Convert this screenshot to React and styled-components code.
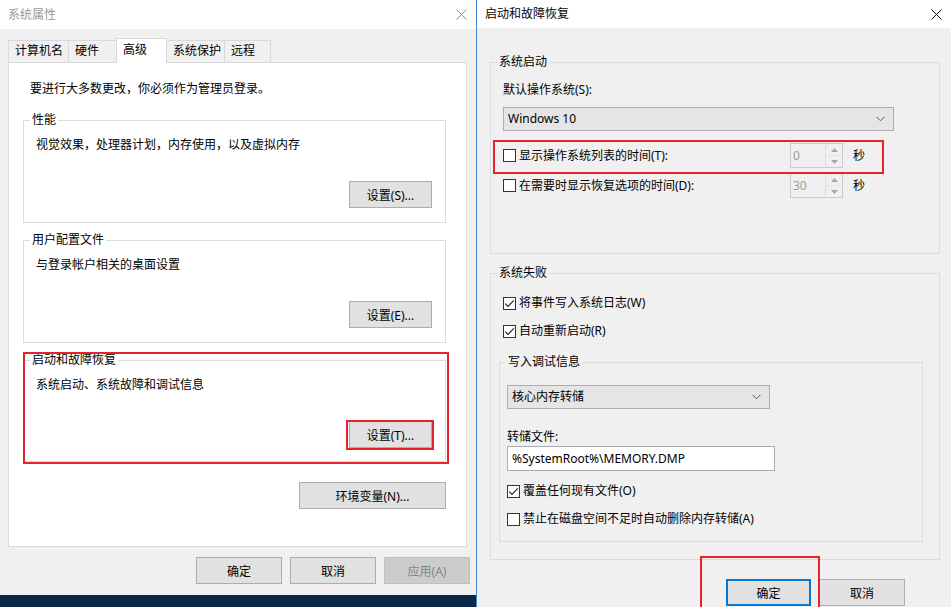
import React from 'react';
import styled, { createGlobalStyle } from 'styled-components';

const font = `"Noto Sans", "Noto Sans CJK SC", sans-serif`;

const GlobalStyle = createGlobalStyle`
  html, body {
    margin: 0;
    padding: 0;
    background: #0c2849;
  }
  body {
    font-family: ${font};
    font-size: 12px;
    line-height: 16px;
    color: #000;
  }
  * { box-sizing: border-box; }
`;

const Screen = styled.div`
  display: flex;
  width: 951px;
  height: 607px;
  overflow: hidden;
`;

const LeftColumn = styled.div`
  width: 476px;
  display: flex;
  flex-direction: column;
`;

const Dialog = styled.div`
  display: flex;
  flex-direction: column;
  background: #f0f0f0;
  height: ${(p) => p.$h}px;
  flex: ${(p) => (p.$grow ? 1 : 'none')};
  border-left: ${(p) => (p.$active ? '1px solid #3b87cc' : 'none')};
`;

const TitleBar = styled.div`
  display: flex;
  align-items: center;
  justify-content: space-between;
  height: ${(p) => p.$h}px;
  padding: 0 9px 0 8px;
  background: #fff;
  flex: none;
`;

const Title = styled.span`
  color: ${(p) => (p.$dim ? '#9a9a9a' : '#000')};
`;

const CloseIcon = ({ dim }) => (
  <svg width="11" height="11" viewBox="0 0 11 11">
    <path d="M0.5 0.5L10.5 10.5M10.5 0.5L0.5 10.5" stroke={dim ? '#8a8a8a' : '#111'} strokeWidth="1" />
  </svg>
);

const LeftBody = styled.div`
  display: flex;
  flex-direction: column;
  padding: 9px 6px 0 8px;
`;

const TabStrip = styled.div`
  display: flex;
  align-items: flex-end;
  height: 25px;
  margin-bottom: -1px;
  position: relative;
  z-index: 1;
`;

const Tab = styled.div`
  width: ${(p) => p.$w}px;
  height: ${(p) => (p.$selected ? 25 : 23)}px;
  margin-right: -1px;
  padding: ${(p) => (p.$selected ? '3px' : '2px')} 0 0 6px;
  border: 1px solid #d9d9d9;
  border-bottom: ${(p) => (p.$selected ? 'none' : '1px solid #d9d9d9')};
  background: ${(p) => (p.$selected ? '#fff' : '#f0f0f0')};
  white-space: nowrap;
  position: relative;
  z-index: ${(p) => (p.$selected ? 2 : 1)};
`;

const TabPanel = styled.div`
  width: 459px;
  height: 485px;
  background: #fff;
  border: 1px solid #d9d9d9;
  padding: 18px 20px 0 14px;
  display: flex;
  flex-direction: column;
`;

const Intro = styled.div`
  margin-left: 7px;
`;

const GroupBox = styled.div`
  display: flex;
  flex-direction: column;
  margin-top: ${(p) => p.$mt || 0}px;
  border: 1px solid #dcdcdc;
`;

const Legend = styled.div`
  align-self: flex-start;
  margin: -9px 0 0 6px;
  padding: 0 2px;
  line-height: 16px;
  background: ${(p) => p.$bg};
`;

const GroupInner = styled.div`
  display: flex;
  flex-direction: column;
  padding: ${(p) => p.$pad};
`;

const Group = ({ title, bg = '#f0f0f0', mt, pad, children }) => (
  <GroupBox $mt={mt}>
    <Legend $bg={bg}>{title}</Legend>
    <GroupInner $pad={pad}>{children}</GroupInner>
  </GroupBox>
);

const GroupText = styled.div`
  margin-bottom: 28px;
`;

const ButtonRow = styled.div`
  display: flex;
  justify-content: flex-end;
  gap: ${(p) => p.$gap || 8}px;
  margin-top: ${(p) => p.$mt || 0}px;
  padding-right: ${(p) => p.$pr || 0}px;
`;

const Button = styled.button`
  width: ${(p) => p.$w}px;
  height: 27px;
  padding: 0;
  font-family: ${font};
  font-size: 12px;
  color: ${(p) => (p.disabled ? '#838383' : '#000')};
  background: ${(p) => (p.disabled ? '#cccccc' : '#e1e1e1')};
  border: ${(p) => (p.$default ? '2px solid #0078d7' : p.disabled ? '1px solid #bfbfbf' : '1px solid #adadad')};
`;

const Marked = styled.div`
  position: relative;
  display: ${(p) => (p.$inline ? 'inline-flex' : 'flex')};
  flex-direction: column;
  margin-top: ${(p) => p.$mt || 0}px;
`;

const RedMark = styled.div`
  position: absolute;
  left: ${(p) => p.$l}px;
  top: ${(p) => p.$t}px;
  width: ${(p) => p.$w || 'auto'};
  height: ${(p) => p.$h || 'auto'};
  right: ${(p) => (p.$r !== undefined ? `${p.$r}px` : 'auto')};
  bottom: ${(p) => (p.$b !== undefined ? `${p.$b}px` : 'auto')};
  border: 2px solid #e3242b;
  pointer-events: none;
  z-index: 5;
`;

const RightBody = styled.div`
  display: flex;
  flex-direction: column;
  padding: 34px 11px 0 13px;
`;

const FieldLabel = styled.div`
  margin-top: ${(p) => p.$mt || 0}px;
`;

const SelectBox = styled.div`
  display: flex;
  align-items: center;
  justify-content: space-between;
  width: ${(p) => p.$w}px;
  height: 24px;
  margin-top: ${(p) => p.$mt || 0}px;
  padding: 0 8px 0 4px;
  background: #e5e5e5;
  border: 1px solid #acacac;
`;

const Chevron = () => (
  <svg width="9" height="6" viewBox="0 0 9 6">
    <path d="M0.5 0.8L4.5 4.8L8.5 0.8" fill="none" stroke="#555" strokeWidth="1" />
  </svg>
);

const Select = ({ w, mt, children }) => (
  <SelectBox $w={w} $mt={mt}>
    <span>{children}</span>
    <Chevron />
  </SelectBox>
);

const CheckRow = styled.div`
  position: relative;
  display: flex;
  align-items: center;
  height: ${(p) => p.$h || 16}px;
  margin-top: ${(p) => p.$mt || 0}px;
  margin-left: ${(p) => p.$ml || 0}px;
`;

const Box = styled.span`
  width: 13px;
  height: 13px;
  flex: none;
  border: 1px solid #333;
  background: #fff;
  display: flex;
  align-items: center;
  justify-content: center;
`;

const CheckLabel = styled.span`
  margin-left: 3px;
  width: ${(p) => (p.$w ? `${p.$w}px` : 'auto')};
  white-space: nowrap;
`;

const CheckBox = ({ checked }) => (
  <Box>
    {checked && (
      <svg width="11" height="11" viewBox="0 0 11 11">
        <path d="M1.2 5.6L4 8.4L9.8 2.4" fill="none" stroke="#222" strokeWidth="1.1" />
      </svg>
    )}
  </Box>
);

const SpinBox = styled.div`
  display: flex;
  width: 53px;
  height: 25px;
  border: 1px solid #cccccc;
  background: #f0f0f0;
`;

const SpinValue = styled.span`
  flex: 1;
  padding-left: 2px;
  line-height: 23px;
  color: #9d9d9d;
`;

const SpinArrows = styled.div`
  width: 17px;
  display: flex;
  flex-direction: column;
  border-left: 1px solid #dddddd;
`;

const SpinHalf = styled.div`
  flex: 1;
  display: flex;
  align-items: center;
  justify-content: center;
  border-top: ${(p) => (p.$down ? '1px solid #e4e4e4' : 'none')};
`;

const Spin = ({ value }) => (
  <SpinBox>
    <SpinValue>{value}</SpinValue>
    <SpinArrows>
      <SpinHalf>
        <svg width="7" height="4" viewBox="0 0 7 4"><path d="M0 4L3.5 0L7 4Z" fill="#a6a6a6" /></svg>
      </SpinHalf>
      <SpinHalf $down>
        <svg width="7" height="4" viewBox="0 0 7 4"><path d="M0 0L3.5 4L7 0Z" fill="#a6a6a6" /></svg>
      </SpinHalf>
    </SpinArrows>
  </SpinBox>
);

const Unit = styled.span`
  margin-left: 10px;
`;

const TextInput = styled.div`
  width: 268px;
  height: 25px;
  margin-top: 1px;
  padding: 0 4px;
  line-height: 23px;
  background: #fff;
  border: 1px solid #acacac;
`;

export default function App() {
  return (
    <>
      <GlobalStyle />
      <Screen>
        <LeftColumn>
          <Dialog $h={595}>
            <TitleBar $h={29}>
              <Title $dim>系统属性</Title>
              <CloseIcon dim />
            </TitleBar>
            <LeftBody>
              <TabStrip>
                <Tab $w={61}>计算机名</Tab>
                <Tab $w={49}>硬件</Tab>
                <Tab $w={51} $selected>高级</Tab>
                <Tab $w={59}>系统保护</Tab>
                <Tab $w={47}>远程</Tab>
              </TabStrip>
              <TabPanel>
                <Intro>要进行大多数更改，你必须作为管理员登录。</Intro>
                <Group title="性能" bg="#fff" mt={23} pad="9px 13px 14px 12px">
                  <GroupText>视觉效果，处理器计划，内存使用，以及虚拟内存</GroupText>
                  <ButtonRow>
                    <Button $w={83}>设置(S)...</Button>
                  </ButtonRow>
                </Group>
                <Group title="用户配置文件" bg="#fff" mt={17} pad="9px 13px 14px 12px">
                  <GroupText>与登录帐户相关的桌面设置</GroupText>
                  <ButtonRow>
                    <Button $w={83}>设置(E)...</Button>
                  </ButtonRow>
                </Group>
                <Marked $mt={17}>
                  <Group title="启动和故障恢复" bg="#fff" pad="9px 13px 13px 12px">
                    <GroupText>系统启动、系统故障和调试信息</GroupText>
                    <ButtonRow>
                      <Marked $inline>
                        <Button $w={83}>设置(T)...</Button>
                        <RedMark $l={-3} $t={-1} $w="88px" $h="30px" />
                      </Marked>
                    </ButtonRow>
                  </Group>
                  <RedMark $l={0} $t={-8} $r={-3} $b={-2} />
                </Marked>
                <ButtonRow $mt={20}>
                  <Button $w={147}>环境变量(N)...</Button>
                </ButtonRow>
              </TabPanel>
              <ButtonRow $mt={10} $gap={8}>
                <Button $w={86}>确定</Button>
                <Button $w={86}>取消</Button>
                <Button $w={86} disabled>应用(A)</Button>
              </ButtonRow>
            </LeftBody>
          </Dialog>
        </LeftColumn>

        <Dialog $active $grow $h={607}>
          <TitleBar $h={28}>
            <Title>启动和故障恢复</Title>
            <CloseIcon />
          </TitleBar>
          <RightBody>
            <Group title="系统启动" pad="12px 12px 55px 12px">
              <FieldLabel>默认操作系统(S):</FieldLabel>
              <Select w={391} mt={9}>Windows 10</Select>
              <CheckRow $h={25} $mt={12}>
                <CheckBox />
                <CheckLabel $w={271}>显示操作系统列表的时间(T):</CheckLabel>
                <Spin value="0" />
                <Unit>秒</Unit>
                <RedMark $l={-10} $t={-3} $w="391px" $h="34px" />
              </CheckRow>
              <CheckRow $h={25} $mt={5}>
                <CheckBox />
                <CheckLabel $w={271}>在需要时显示恢复选项的时间(D):</CheckLabel>
                <Spin value="30" />
                <Unit>秒</Unit>
              </CheckRow>
            </Group>
            <Group title="系统失败" mt={19} pad="14px 16px 17px 8px">
              <CheckRow $ml={4}>
                <CheckBox checked />
                <CheckLabel>将事件写入系统日志(W)</CheckLabel>
              </CheckRow>
              <CheckRow $ml={4} $mt={12}>
                <CheckBox checked />
                <CheckLabel>自动重新启动(R)</CheckLabel>
              </CheckRow>
              <Group title="写入调试信息" mt={23} pad="15px 8px 14px 7px">
                <Select w={263}>核心内存转储</Select>
                <FieldLabel $mt={20}>转储文件:</FieldLabel>
                <TextInput>%SystemRoot%\MEMORY.DMP</TextInput>
                <CheckRow $mt={12}>
                  <CheckBox checked />
                  <CheckLabel>覆盖任何现有文件(O)</CheckLabel>
                </CheckRow>
                <CheckRow $mt={12}>
                  <CheckBox />
                  <CheckLabel>禁止在磁盘空间不足时自动删除内存转储(A)</CheckLabel>
                </CheckRow>
              </Group>
            </Group>
            <ButtonRow $mt={19} $gap={8} $pr={35}>
              <Marked $inline>
                <Button $w={85} $default>确定</Button>
                <RedMark $l={-26} $t={-23} $w="120px" $h="70px" />
              </Marked>
              <Button $w={86}>取消</Button>
            </ButtonRow>
          </RightBody>
        </Dialog>
      </Screen>
    </>
  );
}
